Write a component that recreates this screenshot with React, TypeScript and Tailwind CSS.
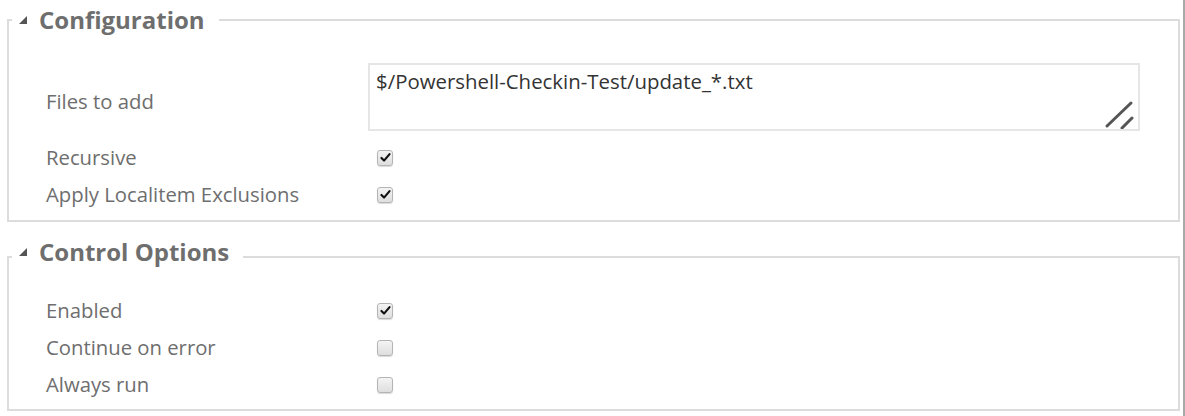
import React from 'react'

const font = { fontFamily: '"Open Sans", "Noto Sans", sans-serif' }

function Checkbox({ checked }: { checked?: boolean }) {
  return (
    <span className="relative flex h-[16px] w-[16px] items-center justify-center rounded-[3px] border border-[#b4b4b4] bg-gradient-to-b from-[#f4f4f4] to-[#dedede] shadow-[0_1px_1px_rgba(0,0,0,0.15)]">
      {checked && (
        <svg viewBox="0 0 16 16" className="h-[13px] w-[13px]">
          <path d="M3 8.5 L6.2 11.8 L13 3.8" fill="none" stroke="#111" strokeWidth="2.6" strokeLinecap="round" strokeLinejoin="round" />
        </svg>
      )}
    </span>
  )
}

function Section({ title, low, children }: { title: string; low?: boolean; children: React.ReactNode }) {
  return (
    <fieldset className="border-2 border-[#dcdcdc]">
      <legend
        className={
          low
            ? 'ml-[3px] flex items-center pl-[7px] pr-[14px] pb-[10px] text-[24px] font-bold leading-[28px] text-[#6e6e6e]'
            : 'ml-[3px] flex items-center pl-[7px] pr-[14px] text-[24px] font-bold leading-[28px] text-[#6e6e6e]'
        }
      >
        <svg viewBox="0 0 10 10" className="mr-[12px] h-[8px] w-[8px]">
          <path d="M10 0 L10 10 L0 10 Z" fill="#555" />
        </svg>
        {title}
      </legend>
      <div className="pl-[37px] pr-[38px]">{children}</div>
    </fieldset>
  )
}

function Row({ label, children }: { label: string; children: React.ReactNode }) {
  return (
    <div className="grid h-[37px] grid-cols-[322px_1fr] items-center">
      <span className="text-[20.3px] text-[#6e6e6e]">{label}</span>
      <div className="pl-[9px]">{children}</div>
    </div>
  )
}

export default function App() {
  return (
    <div className="min-h-[416px] w-[1185px] bg-white pl-[7px] pr-[3px] border-r-2 border-[#a8a8a8]" style={font}>
      <div className="pt-[6px]">
        <Section title="Configuration">
          <div className="grid grid-cols-[322px_1fr] pt-[29px] pb-[8px]">
            <span className="pt-[23px] text-[20.3px] text-[#6e6e6e]">Files to add</span>
            <div className="relative h-[68px] border-2 border-[#e6e6e6] pr-[38px]">
              <textarea
                readOnly
                value="$/Powershell-Checkin-Test/update_*.txt"
                className="h-full w-full resize-none px-[6px] pt-[3px] text-[20.4px] leading-[27px] text-[#333] outline-none"
                style={font}
              />
              <svg viewBox="0 0 30 30" className="absolute bottom-[0px] right-[4px] h-[30px] w-[30px]">
                <path d="M3 27 L27 4" stroke="#555" strokeWidth="3" strokeLinecap="round" />
                <path d="M18 29 L28 19" stroke="#555" strokeWidth="3" strokeLinecap="round" />
              </svg>
            </div>
          </div>
          <div className="pb-[7px]">
            <Row label="Recursive"><Checkbox checked /></Row>
            <Row label="Apply Localitem Exclusions"><Checkbox checked /></Row>
          </div>
        </Section>
      </div>
      <div className="pt-[16px]">
        <Section title="Control Options" low>
          <div className="pt-[16px] pb-[6px]">
            <Row label="Enabled"><Checkbox checked /></Row>
            <Row label="Continue on error"><Checkbox /></Row>
            <Row label="Always run"><Checkbox /></Row>
          </div>
        </Section>
      </div>
    </div>
  )
}
